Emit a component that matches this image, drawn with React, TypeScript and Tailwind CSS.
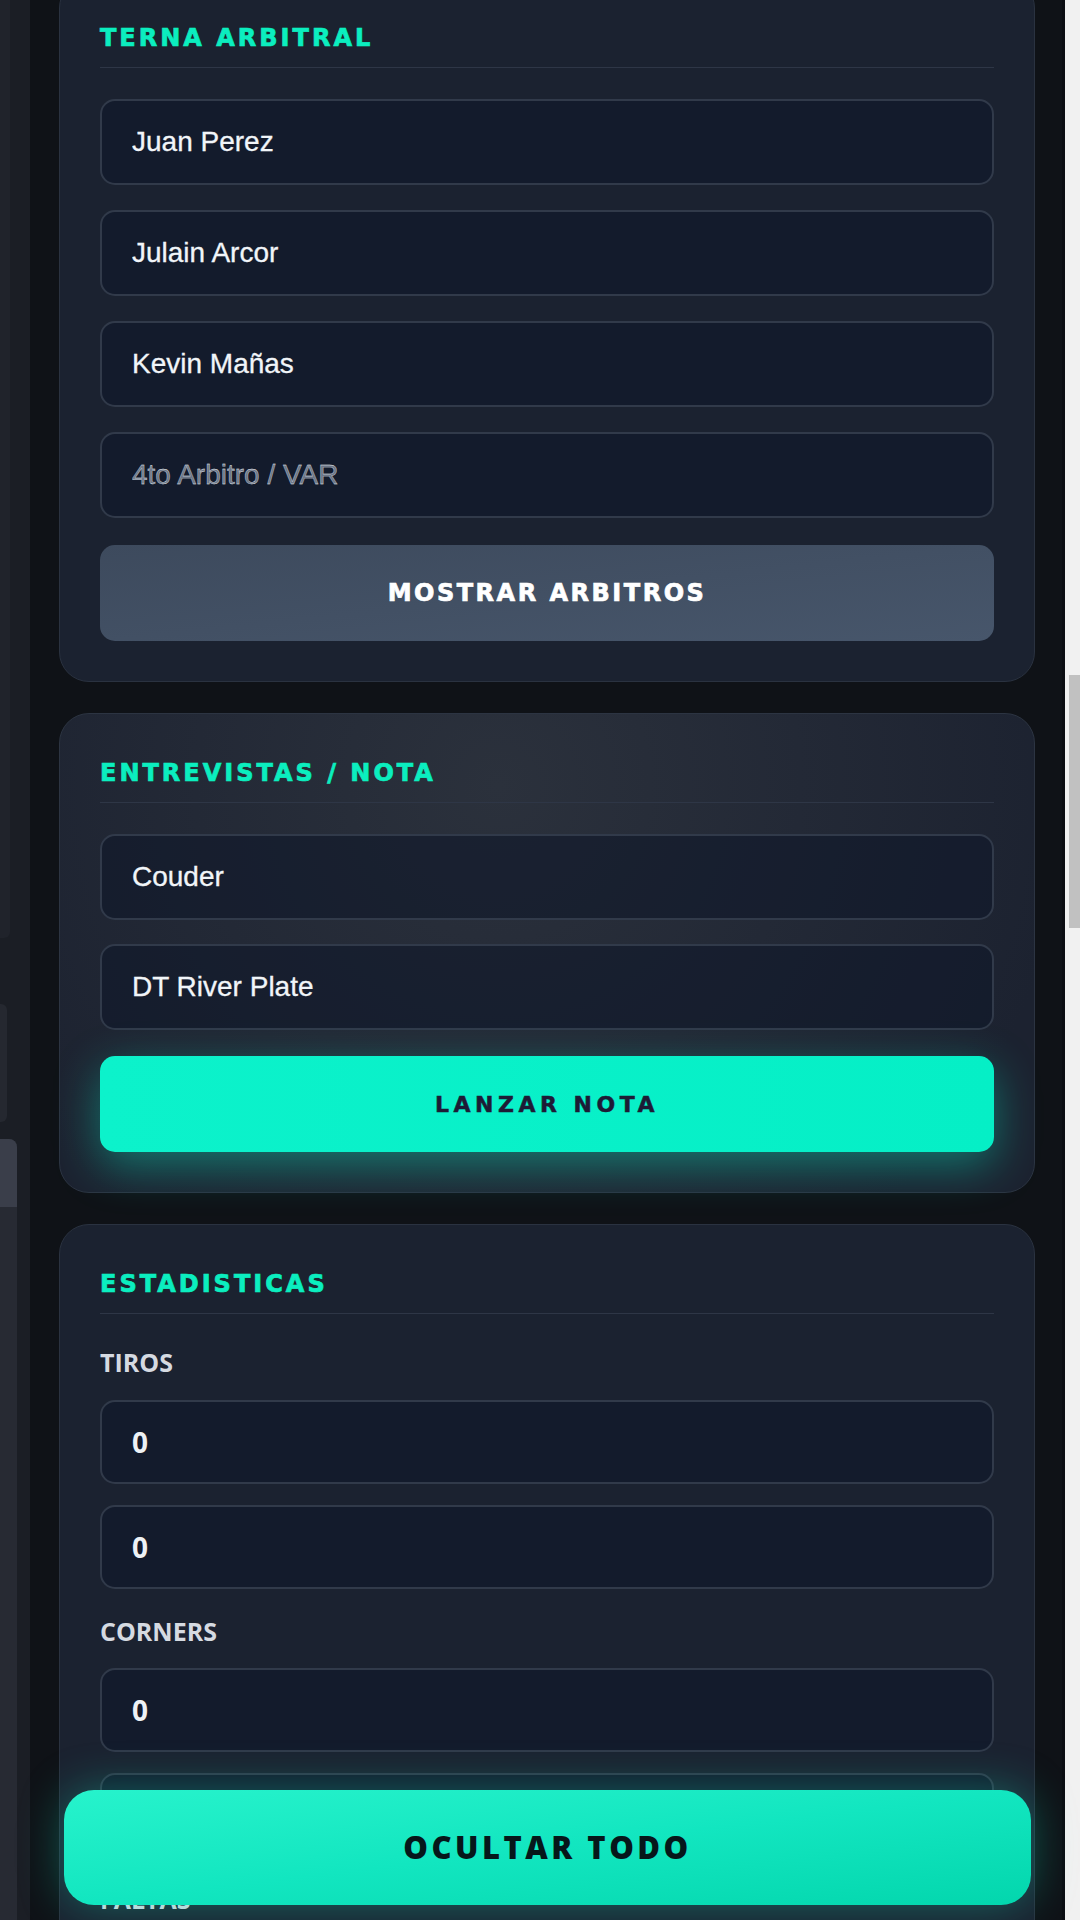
import React from "react";

const heading =
  "font-['DejaVu_Sans',sans-serif] font-bold text-[24px] leading-[32px] tracking-[3px] text-[#0beebf] uppercase [-webkit-text-stroke:0.7px_#0beebf]";
const inputBase =
  "w-full h-[86px] rounded-[15px] border-2 border-[#313a4a] bg-[#0f172a]/60 px-[30px] text-[28px] text-[#f1f5f9] font-['Liberation_Sans',Arial,sans-serif] outline-none placeholder:text-[#6b7587] [-webkit-text-stroke:0.3px_#f1f5f9]";
const statInput =
  "w-full h-[84px] rounded-[15px] border-2 border-[#313a4a] bg-[#0f172a]/60 px-[30px] text-[28px] font-bold text-[#eef1f5] font-['Open_Sans',sans-serif] outline-none";
const label = "font-['Open_Sans',sans-serif] font-bold text-[25px] leading-[34px] text-[#d5dae1]";

function CardTitle({ children }: { children: React.ReactNode }) {
  return (
    <div className="border-b border-[#2e3646] pb-[13px]">
      <h2 className={heading}>{children}</h2>
    </div>
  );
}

function Field({ value, placeholder }: { value?: string; placeholder?: string }) {
  return <input className={inputBase} defaultValue={value} placeholder={placeholder} readOnly />;
}

function StatField() {
  return <input className={statInput} defaultValue="0" readOnly />;
}

export default function App() {
  return (
    <div className="flex h-[1920px] w-[1080px] overflow-hidden bg-[#0f1217]">
      {/* left panel, mostly off screen */}
      <aside className="flex w-[30px] shrink-0 flex-col bg-[#1b1e25]">
        <div className="h-[938px] w-[10px] rounded-br-[6px] bg-[#20232b]" />
        <div className="mt-[66px] h-[118px] w-[7px] rounded-r-[6px] bg-[#252830]" />
        <div className="mt-[17px] flex w-[17px] flex-1 flex-col overflow-hidden rounded-tr-[8px] bg-[#272a33]">
          <div className="h-[68px] bg-[#3a3e4a]" />
        </div>
      </aside>

      {/* main column */}
      <main className="relative flex-1 pl-[29px] pr-[27px]">
        <div className="-mt-[22px] flex flex-col gap-[31px]">
          {/* Terna arbitral */}
          <section className="rounded-[30px] border border-[#2a3240] bg-[#1b2230] px-[40px] pb-[40px] pt-[43px]">
            <CardTitle>Terna Arbitral</CardTitle>
            <div className="mt-[31px] flex flex-col gap-[25px]">
              <Field value="Juan Perez" />
              <Field value="Julain Arcor" />
              <Field value="Kevin Mañas" />
              <Field placeholder="4to Arbitro / VAR" />
              <button className="mt-[2px] h-[96px] w-full rounded-[15px] bg-gradient-to-br from-[#3d4a5d] to-[#47566b] font-['DejaVu_Sans',sans-serif] text-[24px] font-bold tracking-[2.5px] text-white [-webkit-text-stroke:0.7px_#ffffff]">
                MOSTRAR ARBITROS
              </button>
            </div>
          </section>

          {/* Entrevistas */}
          <section className="rounded-[30px] border border-[#2c3442] bg-[radial-gradient(circle_at_45%_15%,#2b313c_0%,#232936_45%,#1c2230_85%)] px-[40px] pb-[40px] pt-[43px]">
            <CardTitle>Entrevistas / Nota</CardTitle>
            <div className="mt-[31px] flex flex-col gap-[24px]">
              <Field value="Couder" />
              <Field value="DT River Plate" />
              <button className="mt-[2px] h-[96px] w-full rounded-[15px] bg-gradient-to-r from-[#0cf2cb] to-[#05efc6] font-['DejaVu_Sans',sans-serif] text-[22px] font-bold tracking-[4.5px] text-[#1d1b36] shadow-[0_14px_45px_rgba(6,240,200,0.4)] [-webkit-text-stroke:0.5px_#1d1b36]">
                LANZAR NOTA
              </button>
            </div>
          </section>

          {/* Estadisticas */}
          <section className="rounded-[30px] border border-[#2a3240] bg-[#1b2230] px-[40px] pb-[40px] pt-[43px]">
            <CardTitle>Estadisticas</CardTitle>
            <div className="mt-[31px] flex flex-col">
              <span className={label}>TIROS</span>
              <div className="mt-[21px] flex flex-col gap-[21px]">
                <StatField />
                <StatField />
              </div>
              <span className={`${label} mt-[25px]`}>CORNERS</span>
              <div className="mt-[20px] flex flex-col gap-[21px]">
                <StatField />
                <StatField />
              </div>
              <span className={`${label} mt-[25px]`}>FALTAS</span>
              <div className="mt-[20px] flex flex-col gap-[21px]">
                <StatField />
                <StatField />
              </div>
            </div>
          </section>
        </div>

        {/* floating hide-all button */}
        <button className="absolute bottom-[15px] left-[34px] right-[31px] h-[115px] rounded-[30px] bg-gradient-to-br from-[#26f3cc] via-[#12e6c0] to-[#03d6ad] font-['Open_Sans',sans-serif] text-[31px] font-extrabold tracking-[3.5px] text-[#06171a] shadow-[0_0_45px_rgba(16,230,190,0.35)]">
          OCULTAR TODO
        </button>
      </main>

      <div className="w-[3px] shrink-0 bg-[#0b0d12]" />
      {/* scrollbar */}
      <div className="w-[15px] shrink-0 bg-[#f1f1f1] pt-[675px]">
        <div className="ml-[4px] h-[253px] w-[11px] bg-[#c1c1c1]" />
      </div>
    </div>
  );
}
